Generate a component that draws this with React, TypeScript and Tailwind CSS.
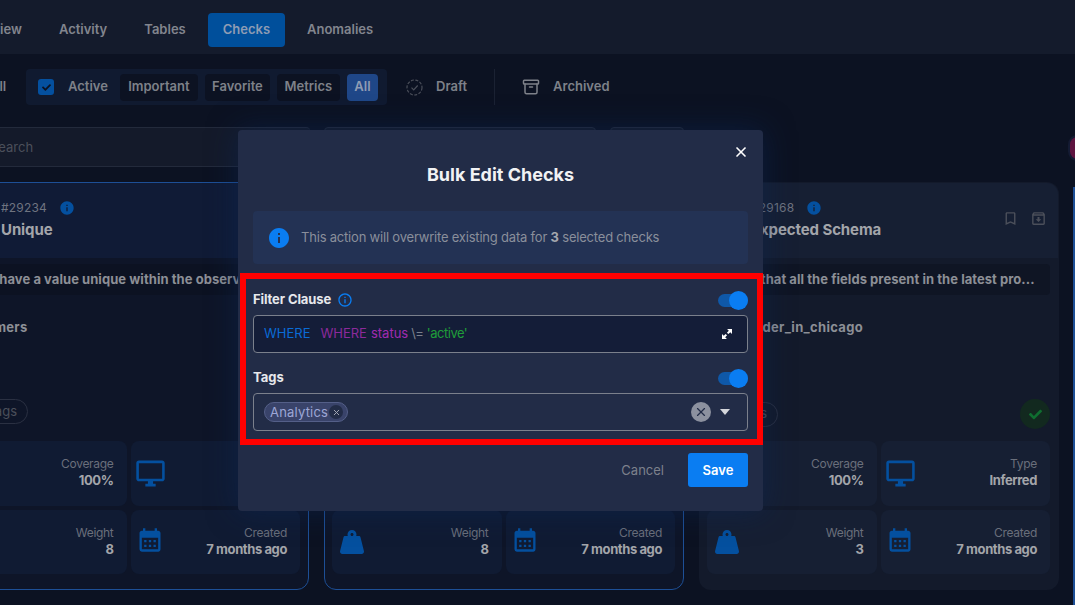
import { Archive, X } from "lucide-react";
import {
  MdCalendarMonth,
  MdInfo,
  MdOutlineArchive,
  MdOutlineBookmarkBorder,
  MdOutlineDesktopWindows,
  MdOutlineInfo,
} from "react-icons/md";
import { FaWeightHanging, FaCheck } from "react-icons/fa";

const tabs = ["Overview", "Activity", "Tables", "Checks", "Anomalies"];
const filters = [
  { label: "Important", width: "w-[78px]" },
  { label: "Favorite", width: "w-[65px]" },
  { label: "Metrics", width: "w-[63px]" },
];

interface CardData {
  id: string;
  title: string;
  desc: string;
  name: string;
  namePad: string;
  weight: number;
  selected: boolean;
}

const cards: CardData[] = [
  {
    id: "#29234",
    title: "Unique",
    desc: "Fields have a value unique within the observed data",
    name: "customers",
    namePad: "pl-[7px]",
    weight: 8,
    selected: true,
  },
  {
    id: "#29201",
    title: "Not Null",
    desc: "Asserts that none of the selected fields are null",
    name: "customers",
    namePad: "pl-[7px]",
    weight: 8,
    selected: true,
  },
  {
    id: "#29168",
    title: "Expected Schema",
    desc: "Asserts that all the fields present in the latest pro...",
    name: "order_in_chicago",
    namePad: "pl-[49px]",
    weight: 3,
    selected: false,
  },
];

function Tile({
  icon,
  label,
  value,
  selected,
}: {
  icon: React.ReactNode;
  label: string;
  value: string;
  selected: boolean;
}) {
  return (
    <div
      className={`flex items-center justify-between rounded-lg pr-[13px] ${
        selected ? "bg-[#101b33]" : "bg-[#161f33]"
      }`}
    >
      <div className="text-[#04509f]">{icon}</div>
      <div className="text-right mb-[2px] tracking-[-0.4px]">
        <div className="text-[12px] leading-[16px] tracking-[-0.3px] text-[#6a6f7b]">{label}</div>
        <div className="text-[13px] leading-[16px] font-bold text-[#a3a5aa]">{value}</div>
      </div>
    </div>
  );
}

function Card({ card }: { card: CardData }) {
  return (
    <div
      className={`relative w-[360px] h-[408px] shrink-0 rounded-xl overflow-hidden ${
        card.selected ? "border border-[#1d4f96] bg-[#0e1528]" : "border border-transparent bg-[#131a2b]"
      }`}
    >
      <div
        className={`h-[75px] pl-[51px] pr-[11px] pt-[16px] flex justify-between ${
          card.selected ? "bg-[#101b36]" : "bg-[#161f33]"
        }`}
      >
        <div>
          <div className="flex items-center gap-[12px] h-[18px]">
            <span className="text-[12px] text-[#6f7480] tracking-[0.2px]">{card.id}</span>
            <MdInfo size={16} className="text-[#04509f]" />
          </div>
          <div className="mt-[2px] text-[15px] leading-[22px] font-bold tracking-[-0.1px] text-[#a3a5aa]">
            {card.title}
          </div>
        </div>
        <div className="flex gap-[11px] pt-[11px] text-[#4b4f5a]">
          <MdOutlineBookmarkBorder size={17} />
          <MdOutlineArchive size={17} />
        </div>
      </div>
      <div
        className={`mx-[8px] mt-[6px] h-[31px] rounded flex items-center text-[13px] font-bold tracking-[0.05px] whitespace-nowrap overflow-hidden text-[#8c8f96] ${
          card.selected ? "bg-[#0c1222]" : "bg-[#0f1524]"
        }`}
      >
        {card.desc}
      </div>
      <div
        className={`mt-[23px] text-[13px] leading-[18px] font-bold tracking-[0.3px] text-[#8c8f96] ${card.namePad}`}
      >
        {card.name}
      </div>
      <div className="absolute left-[-1px] right-[-1px] top-[216px] px-[8px] flex items-center justify-between">
        <span className="h-[25px] w-[71px] rounded-full border border-[#2a3042] flex items-center justify-end pr-[10px] text-[13px] text-[#4b4f5a]">
          Tags
        </span>
        {!card.selected && (
          <span className="mr-[1px] h-[30px] w-[30px] rounded-full bg-[#12291f] flex items-center justify-center text-[#0f6e30]">
            <FaCheck size={13} />
          </span>
        )}
      </div>
      <div className="absolute left-[7px] right-[8px] top-[258px] h-[133px] grid grid-cols-2 grid-rows-2 gap-[4px]">
        <Tile icon={null} label="Coverage" value="100%" selected={card.selected} />
        <Tile
          icon={<MdOutlineDesktopWindows size={31} className="ml-[4px]" />}
          label="Type"
          value="Inferred"
          selected={card.selected}
        />
        <Tile
          icon={<FaWeightHanging size={24} className="ml-[8px]" />}
          label="Weight"
          value={String(card.weight)}
          selected={card.selected}
        />
        <Tile
          icon={<MdCalendarMonth size={28} className="ml-[5px] mb-[3px]" />}
          label="Created"
          value="7 months ago"
          selected={card.selected}
        />
      </div>
    </div>
  );
}

function Toggle() {
  return (
    <div className="relative h-[13px] w-[30px] rounded-full bg-[#0f58a8]">
      <div className="absolute right-0 top-[-3px] h-[19px] w-[19px] rounded-full bg-[#0a7df2]" />
    </div>
  );
}

export default function App() {
  return (
    <div className="relative w-[1075px] h-[605px] overflow-hidden bg-[#0c1222] font-['Inter','Liberation_Sans',sans-serif]">
      {/* Top tabs */}
      <div className="h-[54px] bg-[#141b2c] flex items-start pt-[13px] gap-[7px] ml-[-53px]">
        {tabs.map((t) => (
          <div
            key={t}
            className={`h-[34px] px-[15px] rounded flex items-center text-[13px] font-semibold ${
              t === "Checks" ? "bg-[#004f9b] text-[#8e9cb4]" : "text-[#82858e]"
            }`}
          >
            {t}
          </div>
        ))}
      </div>

      {/* Filter row */}
      <div className="mt-[15px] h-[36px] flex items-center text-[13px] font-semibold text-[#7e8189]">
        <span className="w-[18px] ml-[-10px] pr-[18px] box-content shrink-0">All</span>
        <div className="h-[36px] w-[361px] shrink-0 rounded bg-[#101a30] flex items-center pl-[12px]">
          <span className="h-[16px] w-[16px] rounded-[3px] bg-[#04509f] flex items-center justify-center text-[#0c1222]">
            <FaCheck size={9} />
          </span>
          <span className="ml-[14px] mr-[12px]">Active</span>
          <div className="flex gap-[7px]">
            {filters.map((f) => (
              <span key={f.label} className={`h-[27px] rounded bg-[#0c1222] flex items-center justify-center ${f.width}`}>
                {f.label}
              </span>
            ))}
            <span className="h-[27px] w-[31px] rounded bg-[#1f4788] text-[#8e9cb4] flex items-center justify-center">
              All
            </span>
          </div>
        </div>
        <svg width="17" height="17" viewBox="0 0 17 17" fill="none" className="ml-[19px] text-[#4b4f5a]">
          <circle cx="8.5" cy="8.5" r="7.5" stroke="currentColor" strokeWidth="1.2" strokeDasharray="3 1.5" />
          <path d="M5.5 8.7l2.2 2.2 4-4.4" stroke="currentColor" strokeWidth="1.2" />
        </svg>
        <span className="ml-[13px]">Draft</span>
        <div className="ml-[27px] h-[36px] w-px bg-[#1b2233]" />
        <Archive size={18} className="ml-[27px]" />
        <span className="ml-[13px]">Archived</span>
      </div>

      {/* Search row */}
      <div className="mt-[22px] h-[40px] flex gap-[14px] ml-[-51px]">
        <div className="w-[361px] rounded border-y border-[#232a3b] bg-[#141a2a] pl-[41px] pt-[1px] flex items-center text-[13px] text-[#4b4f5a]">
          Search
        </div>
        <div className="w-[272px] rounded border border-[#232a3b] bg-[#141a2a]" />
        <div className="w-[74px] rounded border border-[#232a3b] bg-[#141a2a]" />
      </div>

      {/* Cards */}
      <div className="mt-[15px] flex gap-[15px] ml-[-51px]">
        {cards.map((c) => (
          <Card key={c.id} card={c} />
        ))}
      </div>

      {/* Right edge */}
      <div className="absolute right-[-10px] top-[137px] h-[22px] w-[15px] rounded-full bg-[#5e1440] ring-2 ring-[#141b33]" />
      <div className="absolute right-0 top-[187px] bottom-0 w-[2px] bg-[#1d4f96]" />

      {/* Modal */}
      <div className="absolute left-[238px] top-[130px] w-[525px] h-[381px] rounded bg-[#222c47] shadow-[0_0_30px_rgba(10,40,90,0.5)] px-[15px] text-white">
        <X size={16} strokeWidth={2.5} className="absolute right-[14px] top-[14px]" />
        <h2 className="pt-[34px] text-center text-[18px] leading-[22px] font-bold text-[#f1f2f4]">
          Bulk Edit Checks
        </h2>
        <div className="mt-[25px] h-[53px] rounded bg-[#233254] flex items-center pl-[14px] gap-[10px] text-[13px] tracking-[-0.2px] text-[#8a8f9b]">
          <MdInfo size={24} className="text-[#0a7df2]" />
          <span>
            This action will overwrite existing data for <b className="text-[#a5a8af]">3</b> selected checks
          </span>
        </div>

        {/* Highlighted fields */}
        <div className="absolute left-[2px] top-[143px] w-[523px] h-[172px] border-[6px] border-[#ff0000] pl-[7px] pr-[9px] pt-[12px]">
          <div className="h-[19px] flex items-center justify-between">
            <div className="flex items-center gap-[6px] text-[13px] font-bold tracking-[-0.1px] text-[#e6e8ec] mt-[-2px]">
              Filter Clause
              <MdOutlineInfo size={16} className="text-[#0a7df2]" />
            </div>
            <Toggle />
          </div>
          <div className="mt-[5px] h-[38px] rounded border border-[#7b808c] bg-[#141d38] flex items-center justify-between pl-[10px] pr-[15px] text-[13px]">
            <div className="mt-[-1px]">
              <span className="text-[#0a6bd6]">WHERE</span>
              <span className="ml-[10px] text-[#8c2a9c]">WHERE</span>
              <span className="ml-[4px] text-[#a12bb0]">status</span>
              <span className="ml-[3px] text-[#7b808c]">\=</span>
              <span className="ml-[3px] tracking-[-0.5px] text-[#1f9d3a]">'active'</span>
            </div>
            <svg width="10" height="10" viewBox="0 0 11 11" fill="white">
              <path d="M5.6 0H11v5.4L9.1 3.5 7 5.6 5.4 4 7.5 1.9zM0 5.6V11h5.4L3.5 9.1 5.6 7 4 5.4 1.9 7.5z" />
            </svg>
          </div>
          <div className="mt-[16px] h-[19px] flex items-center justify-between text-[13px] font-bold text-[#e6e8ec]">
            <span className="mt-[-2px]">Tags</span>
            <Toggle />
          </div>
          <div className="mt-[5px] h-[38px] rounded border border-[#7b808c] flex items-center justify-between pl-[10px] pr-[17px]">
            <div className="h-[20px] rounded-full border border-[#545f88] bg-[#39436a] flex items-center pl-[5px] pr-[4px] text-[13px] tracking-[0.2px] text-[#9da7d6]">
              <span className="pt-[1px]">Analytics</span>
              <span className="ml-[1px] h-[14px] w-[14px] rounded-full bg-[#222c47] flex items-center justify-center text-[#a9adba]">
                <X size={9} strokeWidth={2.5} />
              </span>
            </div>
            <div className="flex items-center gap-[9px]">
              <span className="h-[20px] w-[20px] rounded-full bg-[#8c919f] flex items-center justify-center text-[#222c47]">
                <X size={14} strokeWidth={2} />
              </span>
              <span className="h-0 w-0 border-x-[5.5px] border-x-transparent border-t-[6px] border-t-[#d4d6db]" />
            </div>
          </div>
        </div>

        <div className="absolute right-[15px] top-[323px] flex items-center gap-[24px]">
          <span className="text-[13px] pt-[1px] text-[#7d818c]">Cancel</span>
          <span className="h-[34px] w-[60px] rounded-[3px] bg-[#0a7df2] flex items-center justify-center pt-[1px] text-[13px] font-semibold text-white">
            Save
          </span>
        </div>
      </div>
    </div>
  );
}
